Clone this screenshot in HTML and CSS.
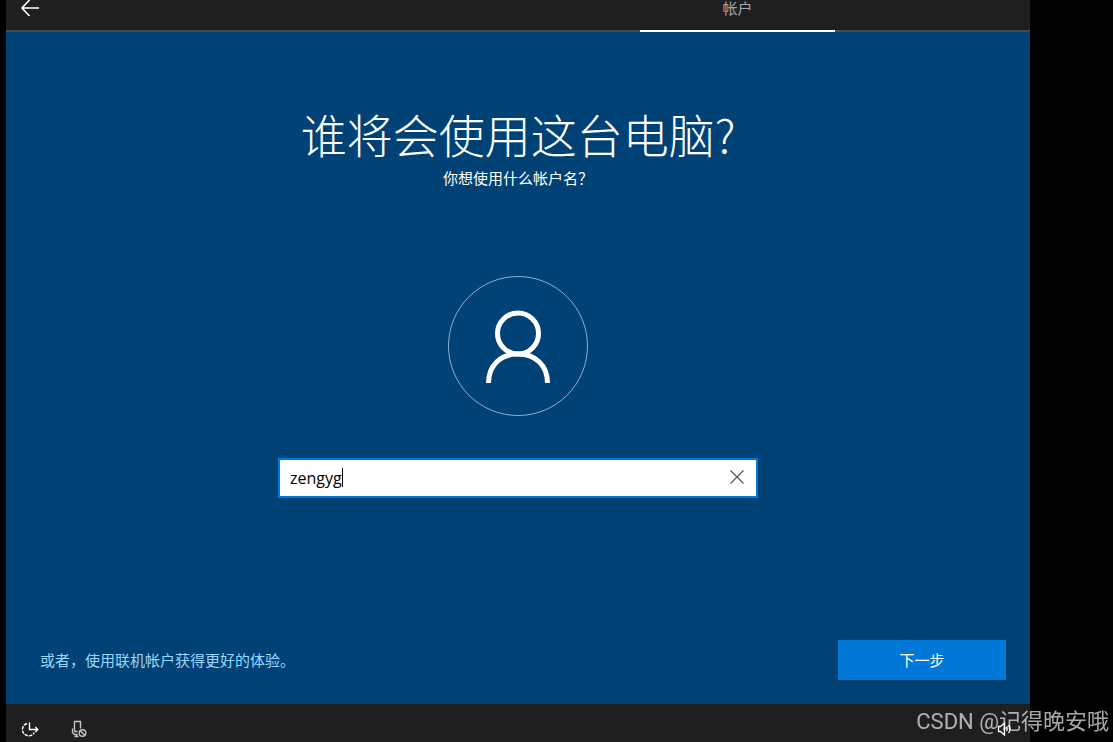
FILE: index.html
```html
<!DOCTYPE html>
<html lang="zh-CN">
<head>
  <meta charset="UTF-8">
  <meta name="viewport" content="width=device-width, initial-scale=1.0">
  <title>帐户</title>
  <link rel="stylesheet" href="styles.css">
</head>
<body>
  <div class="setup">
    <header class="top-bar">
      <button type="button" class="icon-button" aria-label="返回">
        <svg width="20" height="16" viewBox="0 1 20 16" fill="none" stroke="#fff" stroke-width="1.600">
          <path d="M19 9H2M9.500 1L2 9l7.500 8"/>
        </svg>
      </button>
      <nav class="steps">
        <a href="#account" class="step">帐户</a>
      </nav>
    </header>

    <main class="page" id="account">
      <h1>谁将会使用这台电脑?</h1>
      <p class="subtitle">你想使用什么帐户名？</p>

      <div class="avatar">
        <svg width="64" height="74" viewBox="0 0 64 74" fill="none" stroke="#fff" stroke-width="5">
          <circle cx="32" cy="24.500" r="20.500"/>
          <path d="M2.500 74C2.500 56 15 45 32 45s29.500 11 29.500 29"/>
        </svg>
      </div>

      <form class="name-form" id="nameForm">
        <input type="text" class="name-input" aria-label="帐户名" value="zengyg" autocomplete="off" spellcheck="false">
        <span class="caret"></span>
        <button type="button" class="clear-button" aria-label="清除">
          <svg width="16" height="16" viewBox="0 0 16 16" fill="none" stroke="#555" stroke-width="1.200">
            <path d="M1.500 1.500l13 13M14.500 1.500l-13 13"/>
          </svg>
        </button>
      </form>

      <div class="actions">
        <a href="#online" class="online-link">或者，使用联机帐户获得更好的体验。</a>
        <button type="submit" form="nameForm" class="next-button">下一步</button>
      </div>
    </main>

    <footer class="bottom-bar">
      <button type="button" class="icon-button" aria-label="轻松使用">
        <svg width="18" height="16" viewBox="0 0 18 16" fill="none" stroke="#fff" stroke-width="1.400">
          <path d="M8.500 1.500v7h8M14.300 6l2.500 2.500-2.500 2.500"/>
          <path d="M6 2.500A6.300 6.300 0 1 0 13.300 11.500" stroke-dasharray="3.500 1"/>
        </svg>
      </button>
      <button type="button" class="icon-button" aria-label="麦克风">
        <svg width="16" height="18" viewBox="0 0 16 18" fill="none" stroke="#c4c4c4" stroke-width="1.400">
          <path d="M3.500 11.500v-10h6v7M3.500 11.500h3M1.500 8.500v4l2 2h3M5.500 14.500v2M3.500 16.500h4"/>
          <circle cx="11.500" cy="13" r="3.300"/>
          <path d="M9.200 10.700l4.600 4.600"/>
        </svg>
      </button>
      <button type="button" class="icon-button volume" aria-label="音量">
        <svg width="16" height="14" viewBox="0 0 16 14" fill="none" stroke="#fff" stroke-width="1.300">
          <path d="M1.500 4.500h2l4-3.500v12l-4-3.500h-2z"/>
          <path d="M9.500 5q1.500 2 0 4M11.500 3q3 4 0 8"/>
        </svg>
      </button>
    </footer>
  </div>
  <div class="watermark">CSDN @记得晚安哦</div>
</body>
</html>
```
FILE: styles.css
```css
* {
  box-sizing: border-box;
}

body {
  margin: 0;
  background: #000;
  color: #fff;
  font-family: "Noto Sans", "Noto Sans CJK SC", sans-serif;
  font-size: 15px;
  line-height: 20px;
}

button {
  padding: 0;
  border: 0;
  background: none;
  color: inherit;
  font: inherit;
  cursor: pointer;
}

a {
  text-decoration: none;
}

svg {
  display: block;
}

.setup {
  display: flex;
  flex-direction: column;
  min-height: 100vh;
  margin: 0 83px 0 6px;
  background: #1f1f1f;
}

.top-bar {
  display: flex;
  justify-content: space-between;
  align-items: flex-start;
  height: 32px;
  padding: 0 195px 0 14px;
  box-shadow: inset 0 -2px #4a4a4a;
}

.steps {
  display: flex;
  align-self: stretch;
}

.step {
  width: 195px;
  border-bottom: 2px solid #fff;
  color: #a6a6a6;
  text-align: center;
  line-height: 16px;
}

.page {
  flex: 1;
  display: flex;
  flex-direction: column;
  align-items: center;
  padding: 72px 24px 24px;
  background: #004275;
}

h1 {
  margin: 0;
  font-family: "Noto Sans CJK SC", sans-serif;
  font-size: 46px;
  font-weight: 300;
  line-height: 58px;
}

.subtitle {
  margin: 6px 0 0;
  font-family: "Noto Sans CJK SC", sans-serif;
}

.avatar {
  display: flex;
  justify-content: center;
  align-items: center;
  width: 140px;
  height: 140px;
  margin: 88px 0 42px;
  border: 1px solid #8fb0ca;
  border-radius: 50%;
}

.name-form {
  position: relative;
  display: flex;
  align-items: center;
  width: 100%;
  max-width: 480px;
  height: 40px;
  border: 2px solid #0078d7;
  background: #fff;
}

.name-input {
  flex: 1;
  min-width: 0;
  height: 36px;
  padding: 0 10px;
  border: 0;
  outline: 0;
  background: none;
  color: #000;
  font: 16px "Open Sans", "Noto Sans CJK SC", sans-serif;
}

/* text cursor after the typed name */
.caret {
  position: absolute;
  top: 8px;
  left: 62px;
  width: 1px;
  height: 19px;
  background: #000;
}

.clear-button {
  padding: 9px 11px 11px;
}

.actions {
  display: flex;
  justify-content: space-between;
  align-items: center;
  width: 100%;
  margin-top: auto;
  padding-left: 10px;
}

.online-link {
  color: #99d6ff;
}

.next-button {
  width: 168px;
  height: 40px;
  background: #0078d7;
}

.bottom-bar {
  display: flex;
  align-items: center;
  gap: 32px;
  height: 38px;
  padding: 12px 17px 0 15px;
}

.volume {
  margin-left: auto;
}

.watermark {
  position: fixed;
  right: 4px;
  bottom: 5px;
  color: rgba(255, 255, 255, 0.65);
  font-family: Roboto, "Noto Sans CJK SC", sans-serif;
  font-size: 22px;
  line-height: 30px;
  pointer-events: none;
}
```
